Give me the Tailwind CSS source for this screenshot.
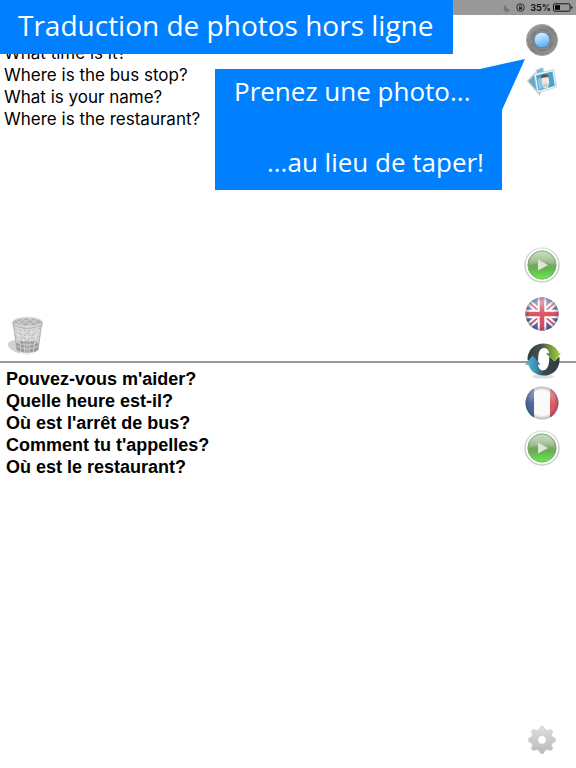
<!DOCTYPE html>
<html lang="fr">
<head>
<meta charset="utf-8">
<meta name="viewport" content="width=device-width, initial-scale=1">
<title>Traduction de photos</title>
<script src="https://cdn.jsdelivr.net/npm/@tailwindcss/browser@4"></script>
</head>
<body class="relative grid h-screen grid-rows-[15px_346fr_2px_405fr] overflow-hidden bg-white font-['Liberation_Sans',sans-serif] text-black">

<svg class="absolute size-0" aria-hidden="true">
  <defs>
    <linearGradient id="green" x1="0" y1="0" x2="0" y2="1"><stop offset="0" stop-color="#c3d8bd"/><stop offset=".3" stop-color="#9abf8e"/><stop offset=".45" stop-color="#7da56a"/><stop offset=".62" stop-color="#68ae52"/><stop offset="1" stop-color="#66f04a"/></linearGradient>
    <linearGradient id="rim" x1="0" y1="0" x2="0" y2="1"><stop offset="0" stop-color="#e4e4e4"/><stop offset=".5" stop-color="#c4c8c3"/><stop offset="1" stop-color="#c9cec8"/></linearGradient>
    <linearGradient id="gloss" x1="0" y1="0" x2="0" y2="1"><stop offset="0" stop-color="#fff" stop-opacity=".65"/><stop offset=".5" stop-color="#fff" stop-opacity=".16"/><stop offset="1" stop-color="#fff" stop-opacity=".1"/></linearGradient>
    <radialGradient id="edge"><stop offset=".75" stop-color="#334" stop-opacity="0"/><stop offset="1" stop-color="#334" stop-opacity=".35"/></radialGradient>
    <clipPath id="disc"><circle cx="17" cy="17" r="16.5"/></clipPath>
    <symbol id="play" viewBox="0 0 36 36">
      <circle cx="18" cy="18" r="17" fill="#fff" stroke="url(#rim)" stroke-width="1.4"/>
      <circle cx="18" cy="18" r="14.2" fill="url(#green)" stroke="#7ba46f" stroke-width=".8"/>
      <path d="M5 18Q18 14 31 18A13 13 0 0 0 5 18" fill="#fff" opacity=".16"/>
      <path d="M14 12.5v11l10-5.5z" fill="#dbe8d5"/>
    </symbol>
  </defs>
</svg>

<header class="flex items-center justify-end gap-[5px] bg-[#999999] pr-[3px]">
  <svg class="size-[8px]" viewBox="0 0 8 8"><path d="M3 .7A3.6 3.6 0 1 0 7.4 5.6 3.9 3.9 0 0 1 3 .7z" fill="#737373"/></svg>
  <svg class="size-[9px]" viewBox="0 0 9 9" fill="none" stroke="#222"><circle cx="4.5" cy="4.5" r="3.8" stroke-width=".9"/><path d="M2.8 4.2h3.4v2.3H2.8z" fill="#222" stroke="none"/><path d="M3.5 4.3V3.2a1 1 0 0 1 2 0v1" stroke-width=".7"/></svg>
  <span class="flex items-center gap-[2px] font-['Inter',sans-serif] text-[9px] leading-[15px] font-bold text-[#161616]">35%
    <svg class="h-[9px] w-[20px]" viewBox="0 0 20 9"><rect x=".5" y=".8" width="16.5" height="7.4" rx="1.3" fill="none" stroke="#151515"/><path d="M2 2.2h5v4.6H2z" fill="#050505"/><path d="M18.2 3v3q1.3-.3 1.3-1.5T18.2 3z" fill="#151515"/></svg>
  </span>
</header>

<section class="flex min-h-0">
  <div class="flex flex-1 flex-col items-start">
    <textarea aria-label="Texte à traduire" class="w-full flex-1 resize-none overflow-hidden pt-[27px] pl-[4px] font-['Inter',sans-serif] text-[17px] leading-[22px] outline-none">What time is it?
Where is the bus stop?
What is your name?
Where is the restaurant?</textarea>
    <button aria-label="Effacer" class="mb-[5px] ml-[7px]">
      <svg class="h-[40px] w-[36px]" viewBox="0 0 36 40">
        <ellipse cx="12" cy="31" rx="11.5" ry="6" fill="#d2d2d2" transform="rotate(18 12 31)"/>
        <path d="M6 5 10 34Q20 42 31 34L35 5z" fill="#cfcfcf"/>
        <path d="M9 27Q20 22 32 27L31 34Q20 40 10 34z" fill="#999"/>
        <path d="M6 10Q20 16 34 10M7 14Q20 20 33 14M8 18Q20 24 33 18M8 22Q20 28 32 22M9 26Q20 32 32 26M10 30Q20 36 31 30M10 6l4 31M15 7l3 31M20 8v31M25 7l-3 31M31 6l-5 31" stroke="#f0f0f0" stroke-width=".6" fill="none"/>
        <path d="m8 13 22 22M7 19l18 18M14 10l18 18M33 12 12 34M27 10 10 28M33 20 18 37" stroke="#a5a5a5" stroke-width=".6" stroke-dasharray="2 1" fill="none"/>
        <ellipse cx="20.500" cy="6" rx="14.500" ry="4.500" fill="#b1b1b1" stroke="#dcdcdc" stroke-width="1.4"/>
        <path d="m9 4 8 6M14 2l11 8M21 2l10 6M31 3l-11 7M25 2 13 9M18 2 9 8" stroke="#d8d8d8" stroke-width=".8"/>
        <path d="M6 6v3Q20 16 35 9V6M10 34Q20 42 31 34M6 6l4 28M35 6l-4 28" fill="none" stroke="#aaa" stroke-width=".9"/>
        <path d="M13 36.500q7 2.500 14 0" fill="none" stroke="#f0f0f0" stroke-width="1.500"/>
      </svg>
    </button>
  </div>
  <nav class="flex w-[68px] flex-col items-center pt-[8px] pb-[30px]">
    <button aria-label="Prendre une photo">
      <svg class="size-[34px]" viewBox="0 0 34 34">
        <defs>
          <linearGradient id="metal" x1="0" y1="0" x2="1" y2="1"><stop stop-color="#a3a3a3"/><stop offset=".5" stop-color="#7e7e7e"/><stop offset="1" stop-color="#999"/></linearGradient>
          <linearGradient id="lens" x1=".3" y1="0" x2=".6" y2="1"><stop stop-color="#d9f2ff"/><stop offset=".45" stop-color="#9dd5fd"/><stop offset="1" stop-color="#55a9fa"/></linearGradient>
        </defs>
        <circle cx="17" cy="17" r="15.6" fill="url(#metal)" stroke="#a6a6a6"/>
        <circle cx="17" cy="17" r="12" fill="#7c7c7c" stroke="#929292" stroke-width=".8"/>
        <path d="M10 7 25 10M24 7l4 12M28 15l-7 12M24 26 11 25M12 28 6 17M6 20 13 7" stroke="#959595" stroke-width=".7"/>
        <circle cx="17" cy="17" r="7.8" fill="url(#lens)" stroke="#557f9e" stroke-width=".7"/>
      </svg>
    </button>
    <button aria-label="Choisir une photo" class="mt-[7px]">
      <svg class="h-[34px] w-[32px]" viewBox="0 0 32 34">
        <path d="M1.5 17 14 4l7 11-7.500 16z" fill="#67a9c7" stroke="#d2d8db" stroke-width="1.2"/>
        <path d="m10 6 7-2.500L22 24l-9 3z" fill="#75b9d9" stroke="#dce3e6"/>
        <path d="M8 10 28 5.500 30.500 23 11.500 29z" fill="#eef3f4" stroke="#bcc7cb" stroke-width=".7"/>
        <path d="M10 11.500 26.500 7.500 28.800 21.800 12.500 26.800z" fill="#4ba3d3"/>
        <path d="m11.500 16 5-4v12l-3.500 1.500z" fill="#87c9e7"/>
        <path d="m15.500 13 7-1 .8 7-1.300 4.500-4.300 1-1.700-5z" fill="#efe8df"/>
        <path d="M15 14.500q-.8-3.500 3-4.200 5-.4 5 3.700l-1.200-1-5 .8z" fill="#635449"/>
        <path d="m17 20 5-.8-.7 3.800-3.300.6z" fill="#d5cabd"/>
      </svg>
    </button>
    <button aria-label="Écouter l'anglais" class="mt-auto"><svg class="size-[36px]"><use href="#play"/></svg></button>
    <button aria-label="Langue source : anglais" class="mt-[14px]">
      <svg class="size-[34px]" viewBox="0 0 34 34">
        <g clip-path="url(#disc)"><path d="M0 0h34v34H0z" fill="#30559c"/><path d="m0 2 34 30M0 32 34 2" stroke="#fff" stroke-width="6"/><path d="m0 2 34 30M0 32 34 2" stroke="#d43c4c" stroke-width="2"/><path d="M17 0v34M0 17h34" stroke="#fff" stroke-width="8.500"/><path d="M17 0v34M0 17h34" stroke="#d2354a" stroke-width="4.600"/><path d="M0 0h34v34H0z" fill="url(#gloss)"/></g>
        <circle cx="17" cy="17" r="16.500" fill="url(#edge)"/>
      </svg>
    </button>
  </nav>
</section>

<div class="relative bg-[#979a98]">
  <button aria-label="Inverser les langues" class="absolute -top-[18px] right-[15px]">
    <svg class="h-[36px] w-[36px]" viewBox="0 0 36 36">
      <defs>
        <linearGradient id="ringA" x1="0" y1="0" x2="1" y2="0"><stop stop-color="#343d40"/><stop offset=".4" stop-color="#485350"/><stop offset=".75" stop-color="#7fa63a"/><stop offset="1" stop-color="#a5d63d"/></linearGradient>
        <linearGradient id="ringB" x1="0" y1="0" x2="1" y2="0"><stop stop-color="#5cb9de"/><stop offset=".3" stop-color="#3f91b4"/><stop offset=".55" stop-color="#344a51"/><stop offset="1" stop-color="#31393b"/></linearGradient>
      </defs>
      <ellipse cx="18" cy="33.500" rx="11" ry="2" fill="#ddd"/>
      <ellipse cx="18.500" cy="16.500" rx="6" ry="12" fill="#fff"/>
      <path d="M2.500 17.500C2 7 9.500 .5 18.500 .5c7.500 0 13.500 4 15.300 9.500H36l-6.500 8.500L21 10.500l3-.5C23.500 6.500 21.500 5 19 5c-4.500 0-6 5-5.800 13z" fill="url(#ringA)"/>
      <path d="M34.300 13.500C36 24.500 29 32.500 19 32.500 11 32.500 5.500 28 3.500 22L0 21.500 7.800 12.500 15.500 21.500l-2.500.3c.5 4 2.500 6 5 5.800 5-.5 6.500-6.500 6.200-14L29.500 18.500z" fill="url(#ringB)"/>
    </svg>
  </button>
</div>

<section class="flex min-h-0">
  <p class="flex-1 pt-[5px] pl-[6px] text-[18px] leading-[22px] font-bold">Pouvez-vous m'aider?<br>Quelle heure est-il?<br>Où est l'arrêt de bus?<br>Comment tu t'appelles?<br>Où est le restaurant?</p>
  <nav class="flex w-[68px] flex-col items-center pt-[23px] pb-[11px]">
    <button aria-label="Langue cible : français">
      <svg class="size-[34px]" viewBox="0 0 34 34">
        <g clip-path="url(#disc)"><path d="M0 0h34v34H0z" fill="#f8f8fa"/><path d="M0 0h9v34H0z" fill="#274f8f"/><path d="M25 0h9v34h-9z" fill="#d53d47"/><path d="M0 0h34v34H0z" fill="url(#gloss)"/></g>
        <circle cx="17" cy="17" r="16.500" fill="url(#edge)"/>
      </svg>
    </button>
    <button aria-label="Écouter le français" class="mt-[10px]"><svg class="size-[36px]"><use href="#play"/></svg></button>
    <button aria-label="Réglages" class="mt-auto">
      <svg class="size-[34px]" viewBox="0 0 34 34">
        <defs><linearGradient id="gear" x1="0" y1="0" x2="0" y2="1"><stop stop-color="#dedede"/><stop offset="1" stop-color="#b9b9b9"/></linearGradient></defs>
        <path fill="url(#gear)" stroke="#c4c4c4" stroke-width=".5" stroke-linejoin="round" fill-rule="evenodd" d="M14 6.500 15.500 3.500h3L20 6.500l2.500 1L25.800 6.300 27.900 8.400 26.500 11.500l1 2.500 3 1.500v3l-3 1.500-1 2.500 1.400 3.100-2.100 2.100L22.500 26.500l-2.500 1-1.500 3h-3L14 27.500l-2.500-1-3.300 1.200-2.100-2.100L7.500 22.500 6.500 20l-3-1.500v-3l3-1.500 1-2.500L6.100 8.400 8.200 6.300 11.500 7.500zM17 12.500a4.300 4.300 0 1 0 0 8.600 4.300 4.300 0 0 0 0-8.600z"/>
      </svg>
    </button>
  </nav>
</section>

<h1 class="absolute top-0 left-0 h-[54px] w-[453px] bg-[#0080ff] pl-[18px] font-['Open_Sans',sans-serif] text-[28px] leading-[50px] whitespace-nowrap text-white">Traduction de photos hors ligne</h1>

<aside class="absolute top-[59px] right-[51px] w-[310px] font-['Open_Sans',sans-serif] text-[26px] leading-[36px] whitespace-nowrap text-white">
  <svg class="absolute inset-0 -z-10 h-full w-full" viewBox="0 0 310 131" preserveAspectRatio="none" aria-hidden="true"><path d="M0 10h265L310 0 287 51v80H0z" fill="#0080ff"/></svg>
  <div class="flex h-[131px] flex-col justify-between pt-[14px] pr-[41px] pb-[10px] pl-[19px]">
    <p>Prenez une photo...</p>
    <p class="self-end">...au lieu de taper!</p>
  </div>
</aside>
</body>
</html>
